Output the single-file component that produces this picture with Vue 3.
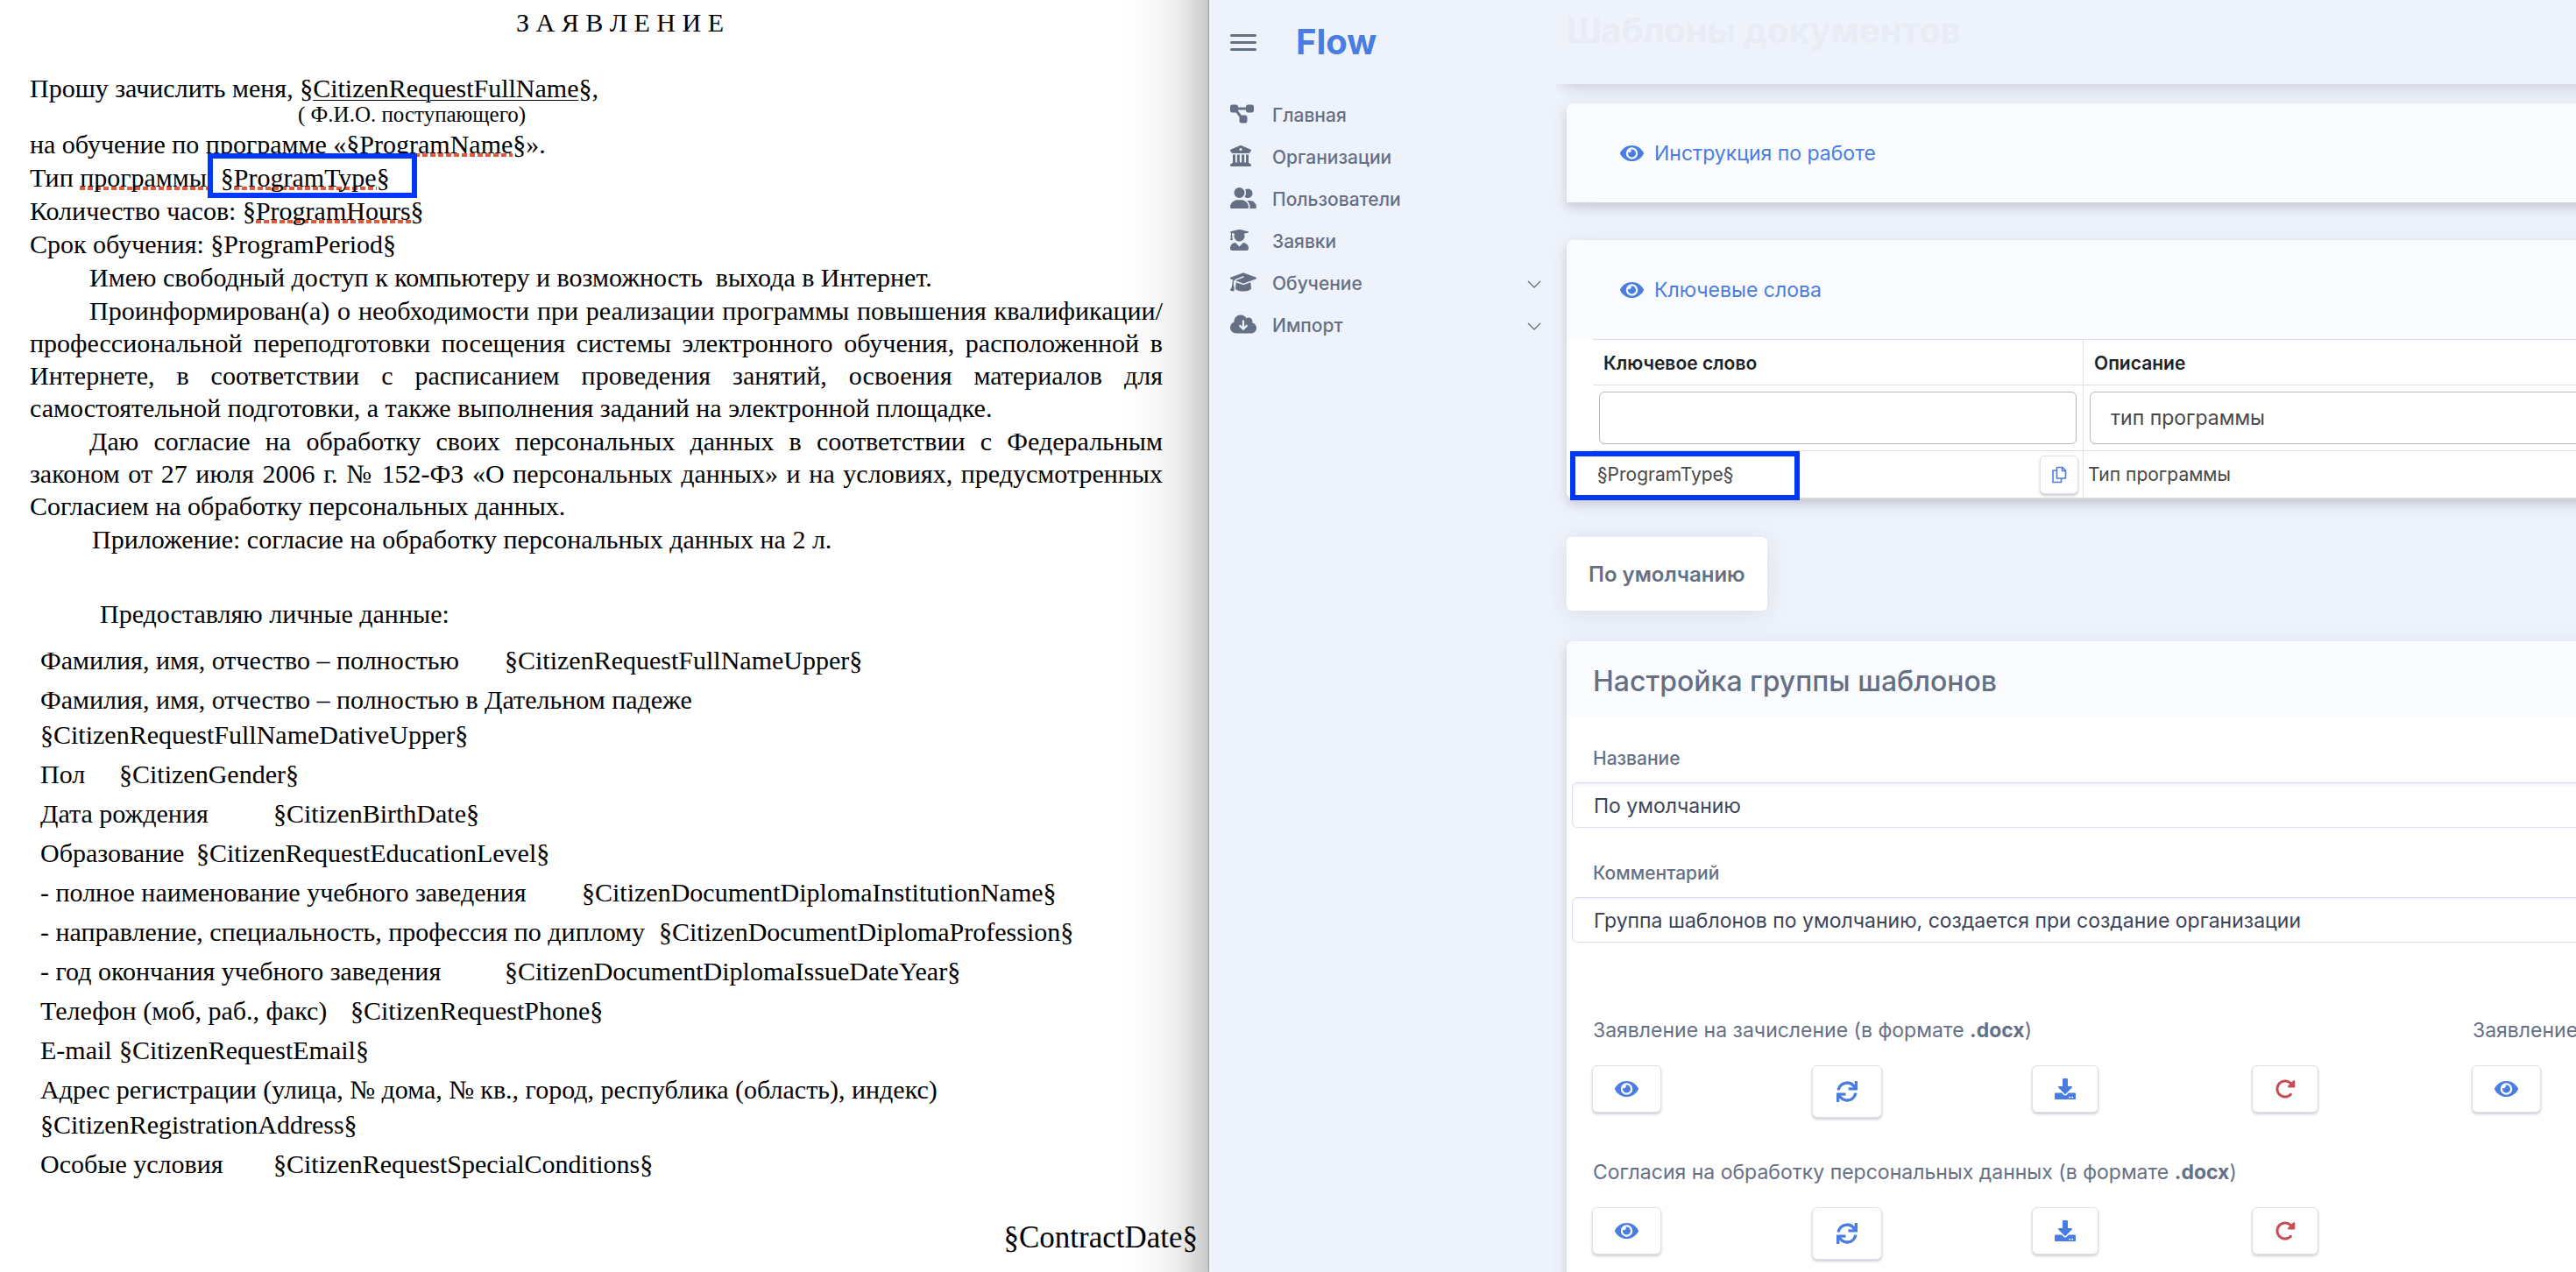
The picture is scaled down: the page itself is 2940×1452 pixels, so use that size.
<script setup>
import { ref } from 'vue'

const icons = {
  diagram: { box: '0 0 576 512', d: 'M0 80C0 53.5 21.5 32 48 32h96c26.5 0 48 21.5 48 48V96H384V80c0-26.5 21.5-48 48-48h96c26.5 0 48 21.5 48 48v96c0 26.5-21.5 48-48 48H432c-26.5 0-48-21.5-48-48V160H192v16c0 1.7-.1 3.4-.3 5L272 288h96c26.5 0 48 21.5 48 48v96c0 26.5-21.5 48-48 48H272c-26.5 0-48-21.5-48-48V336c0-1.7 .1-3.4 .3-5L144 224H48c-26.5 0-48-21.5-48-48V80z' },
  columns: { box: '0 0 512 512', d: 'M243.4 2.6l-224 96c-14 6-21.8 21-18.7 35.8S16.8 160 32 160v8c0 13.3 10.7 24 24 24H456c13.3 0 24-10.7 24-24v-8c15.2 0 28.3-10.7 31.3-25.6s-4.8-29.9-18.7-35.8l-224-96c-8-3.4-17.2-3.4-25.2 0zM128 224H64V420.3c-.6 .3-1.2 .7-1.8 1.1l-48 32c-11.7 7.8-17 22.4-12.9 35.9S17.9 512 32 512H480c14.1 0 26.5-9.2 30.6-22.7s-1.1-28.1-12.9-35.9l-48-32c-.6-.4-1.2-.7-1.8-1.1V224H384V416H344V224H280V416H232V224H168V416H128V224zM256 64a32 32 0 1 1 0 64 32 32 0 1 1 0-64z' },
  users: { box: '0 0 640 512', d: 'M96 128a128 128 0 1 1 256 0A128 128 0 1 1 96 128zM0 482.3C0 383.8 79.8 304 178.3 304h91.4C368.2 304 448 383.8 448 482.3c0 16.4-13.3 29.7-29.7 29.7H29.7C13.3 512 0 498.7 0 482.3zM609.3 512H471.4c5.4-9.4 8.6-20.3 8.6-32v-8c0-60.7-27.1-115.2-69.8-151.8c2.4-.1 4.7-.2 7.1-.2h61.4C567.8 320 640 392.2 640 481.3c0 17-13.8 30.7-30.7 30.7zM432 256c-31 0-59-12.6-79.3-32.9C372.4 196.5 384 163.6 384 128c0-26.8-6.6-52.1-18.3-74.3C384.3 40.1 407.2 32 432 32c61.9 0 112 50.1 112 112s-50.1 112-112 112z' },
  student: { box: '0 0 448 512', d: 'M319.4 320.6L224 416l-95.4-95.4C57.1 323.7 0 382.2 0 454.4v9.6c0 26.5 21.5 48 48 48h352c26.5 0 48-21.5 48-48v-9.6c0-72.2-57.1-130.7-128.6-133.8zM13.6 79.8l6.4 1.5v58.4c-7 4.2-12 11.5-12 20.3 0 8.4 4.6 15.4 11.1 19.7L3.5 242c-1.7 6.9 2.1 14 7.6 14h41.8c5.5 0 9.3-7.1 7.6-14l-15.6-62.3C51.4 175.4 56 168.4 56 160c0-8.8-5-16.1-12-20.3V87.1l66 15.9c-8.6 17.2-14 36.4-14 57 0 70.7 57.3 128 128 128s128-57.3 128-128c0-20.6-5.3-39.8-14-57l96.3-23.2c18.2-4.4 18.2-27.1 0-31.5l-190.4-46c-13-3.1-26.7-3.1-39.7 0L13.6 48.2c-18.1 4.4-18.1 27.2 0 31.6z' },
  cap: { box: '0 0 640 512', d: 'M320 32c-8.1 0-16.1 1.4-23.7 4.1L15.8 137.4C6.3 140.9 0 149.9 0 160s6.3 19.1 15.8 22.6l57.9 20.9C57.3 229.3 48 259.8 48 291.9v28.1c0 28.4-10.8 57.7-22.3 80.8c-6.5 13-13.9 25.8-22.5 37.6C0 442.7-.9 448.3 .9 453.4s6 8.9 11.2 10.2l64 16c4.2 1.1 8.7 .3 12.4-2s6.3-6.1 7.1-10.4c8.6-42.8 4.3-81.2-2.1-108.7C90.3 344.3 86 329.8 80 316.5V291.9c0-30.2 10.2-58.7 27.9-81.5c12.9-15.5 29.6-28 49.2-35.7l157-61.7c8.2-3.2 17.5 .8 20.7 9s-.8 17.5-9 20.7l-157 61.7c-12.4 4.9-23.3 12.4-32.2 21.6l159.6 57.6c7.6 2.7 15.6 4.1 23.7 4.1s16.1-1.4 23.7-4.1L624.2 182.6c9.5-3.4 15.8-12.5 15.8-22.6s-6.3-19.1-15.8-22.6L343.7 36.1C336.1 33.4 328.1 32 320 32zM128 408c0 35.3 86 72 192 72s192-36.7 192-72L496.7 262.6 354.5 314c-11.1 4-22.8 6-34.5 6s-23.5-2-34.5-6L143.3 262.6 128 408z' },
  cloud: { box: '0 0 640 512', d: 'M144 480C64.5 480 0 415.5 0 336c0-62.8 40.2-116.2 96.2-135.9c-.1-2.7-.2-5.4-.2-8.1c0-88.4 71.6-160 160-160c59.3 0 111 32.2 138.7 80.2C409.9 102 428.3 96 448 96c53 0 96 43 96 96c0 12.2-2.3 23.8-6.4 34.6C596 238.4 640 290.1 640 352c0 70.7-57.3 128-128 128H144zm79-167l80 80c9.4 9.4 24.6 9.4 33.9 0l80-80c9.4-9.4 9.4-24.6 0-33.9s-24.6-9.4-33.9 0l-39 39V184c0-13.3-10.7-24-24-24s-24 10.7-24 24V318.1l-39-39c-9.4-9.4-24.6-9.4-33.9 0s-9.4 24.6 0 33.9z' },
  eye: { box: '0 0 576 512', d: 'M572.52 241.4C518.29 135.59 410.93 64 288 64S57.68 135.64 3.48 241.41a32.35 32.35 0 0 0 0 29.19C57.71 376.41 165.07 448 288 448s230.32-71.64 284.52-177.41a32.35 32.35 0 0 0 0-29.19zM288 400a144 144 0 1 1 144-144 143.93 143.93 0 0 1-144 144zm0-240a95.31 95.31 0 0 0-25.31 3.79 47.85 47.85 0 0 1-66.9 66.9A95.78 95.78 0 1 0 288 160z' },
  sync: { box: '0 0 512 512', d: 'M440.65 12.57l4 82.77A247.16 247.16 0 0 0 255.83 8C134.73 8 33.91 94.92 12.29 209.82A12 12 0 0 0 24.09 224h49.05a12 12 0 0 0 11.67-9.26 175.91 175.91 0 0 1 317-56.94l-101.46-4.86a12 12 0 0 0-12.57 12v47.41a12 12 0 0 0 12 12H500a12 12 0 0 0 12-12V12a12 12 0 0 0-12-12h-47.37a12 12 0 0 0-11.98 12.57zM255.83 432a175.61 175.61 0 0 1-146-77.8l101.8 4.87a12 12 0 0 0 12.57-12v-47.4a12 12 0 0 0-12-12H12a12 12 0 0 0-12 12V500a12 12 0 0 0 12 12h47.35a12 12 0 0 0 12-12.6l-4.15-82.57A247.17 247.17 0 0 0 255.83 504c121.11 0 221.93-86.92 243.55-201.82a12 12 0 0 0-11.8-14.18h-49.05a12 12 0 0 0-11.67 9.26A175.86 175.86 0 0 1 255.83 432z' },
  download: { box: '0 0 512 512', d: 'M216 0h80c13.3 0 24 10.7 24 24v168h87.7c17.8 0 26.7 21.5 14.1 34.1L269.7 378.3c-7.5 7.5-19.8 7.5-27.3 0L90.1 226.1c-12.6-12.6-3.7-34.1 14.1-34.1H192V24c0-13.3 10.7-24 24-24zm296 376v112c0 13.3-10.7 24-24 24H24c-13.3 0-24-10.7-24-24V376c0-13.3 10.7-24 24-24h146.7l49 49c20.1 20.1 52.5 20.1 72.6 0l49-49H488c13.3 0 24 10.7 24 24zm-124 88c0-11-9-20-20-20s-20 9-20 20 9 20 20 20 20-9 20-20zm64 0c0-11-9-20-20-20s-20 9-20 20 9 20 20 20 20-9 20-20z' },
  reset: { box: '0 0 512 512', d: 'M463.5 224H472c13.3 0 24-10.7 24-24V72c0-9.7-5.8-18.5-14.8-22.2s-19.3-1.7-26.2 5.2L413.4 96.6c-87.6-86.5-228.7-86.2-315.8 1c-87.5 87.5-87.5 229.3 0 316.8s229.3 87.5 316.8 0c12.5-12.5 12.5-32.8 0-45.3s-32.8-12.5-45.3 0c-62.5 62.5-163.8 62.5-226.3 0s-62.5-163.8 0-226.3c62.2-62.2 162.7-62.5 225.3-1L327 183c-6.9 6.9-8.9 17.2-5.2 26.2s12.5 14.8 22.2 14.8H463.5z' },
}

const nav = [
  { label: 'Главная', icon: 'diagram' },
  { label: 'Организации', icon: 'columns' },
  { label: 'Пользователи', icon: 'users' },
  { label: 'Заявки', icon: 'student' },
  { label: 'Обучение', icon: 'cap', nested: true },
  { label: 'Импорт', icon: 'cloud', nested: true },
]

const personal = [
  ['Фамилия, имя, отчество – полностью\t§CitizenRequestFullNameUpper§'],
  ['Фамилия, имя, отчество – полностью в Дательном падеже', '§CitizenRequestFullNameDativeUpper§'],
  ['Пол\t§CitizenGender§'],
  ['Дата рождения\t§CitizenBirthDate§'],
  ['Образование\t§CitizenRequestEducationLevel§'],
  ['- полное наименование учебного заведения\t§CitizenDocumentDiplomaInstitutionName§'],
  ['- направление, специальность, профессия по диплому\t§CitizenDocumentDiplomaProfession§'],
  ['- год окончания учебного заведения\t§CitizenDocumentDiplomaIssueDateYear§'],
  ['Телефон (моб, раб., факс)\t§CitizenRequestPhone§'],
  ['E-mail\t§CitizenRequestEmail§'],
  ['Адрес регистрации (улица, № дома, № кв., город, республика (область), индекс)', '§CitizenRegistrationAddress§'],
  ['Особые условия\t§CitizenRequestSpecialConditions§'],
]

const actions = [
  { icon: 'eye', title: 'Просмотр' },
  { icon: 'sync', title: 'Заменить', tall: true },
  { icon: 'download', title: 'Скачать' },
  { icon: 'reset', title: 'Сбросить', danger: true },
]

const templates = [
  'Заявление на зачисление',
  'Заявление на отчисление',
  'Согласия на обработку персональных данных',
]

const keyword = ref('')
const description = ref('тип программы')
const groupName = ref('По умолчанию')
const comment = ref('Группа шаблонов по умолчанию, создается при создание организации')
</script>

<template>
  <div class="screen">
    <article class="doc">
      <div class="doc-text">
        <h1>З А Я В Л Е Н И Е</h1>
        <p class="lead">Прошу зачислить меня, §<u>CitizenRequestFullName</u>§,</p>
        <p class="hint">( Ф.И.О. поступающего)</p>
        <p>на обучение по программе «§<span class="typo">ProgramName</span>§».</p>
        <p>Тип <span class="typo">программы:</span> <span class="marked">§<span class="typo">ProgramType</span>§<i class="frame frame-doc"></i></span></p>
        <p>Количество часов: §<span class="typo">ProgramHours</span>§</p>
        <p>Срок обучения: §ProgramPeriod§</p>
        <p class="indent">Имею свободный доступ к компьютеру и возможность&nbsp; выхода в Интернет.</p>
        <p class="indent">Проинформирован(а) о необходимости при реализации программы повышения квалификации/<wbr>профессиональной переподготовки посещения системы электронного обучения, расположенной в Интернете, в соответствии с расписанием проведения занятий, освоения материалов для самостоятельной подготовки, а также выполнения заданий на электронной площадке.</p>
        <p class="indent">Даю согласие на обработку своих персональных данных в соответствии с Федеральным законом от 27 июля 2006 г. № 152-ФЗ «О персональных данных» и на условиях, предусмотренных Согласием на обработку персональных данных.</p>
        <p class="indent attachment">Приложение: согласие на обработку персональных данных на 2 л.</p>
        <p class="personal-title">Предоставляю личные данные:</p>
      </div>
      <div class="personal">
        <div v-for="row in personal" :key="row[0]" class="personal-row">
          <div v-for="line in row" :key="line">{{ line }}</div>
        </div>
      </div>
      <p class="contract">§ContractDate§</p>
    </article>

    <div class="app">
      <aside class="sidebar">
        <div class="brand-row">
          <button class="burger" type="button" aria-label="Меню"><i></i><i></i><i></i></button>
          <a class="brand" href="#">Flow</a>
        </div>
        <nav>
          <a v-for="item in nav" :key="item.label" class="nav-item" href="#">
            <span class="nav-icon">
              <svg :viewBox="icons[item.icon].box" height="24"><path :d="icons[item.icon].d" fill="currentColor" /></svg>
            </span>
            <span class="nav-label">{{ item.label }}</span>
            <svg v-if="item.nested" class="chevron" viewBox="0 0 16 10" width="16" height="10"><path d="M1 1l7 7 7-7" fill="none" stroke="currentColor" stroke-width="1.3" /></svg>
          </a>
        </nav>
      </aside>

      <main class="main">
        <header class="topbar"><h2>Шаблоны документов</h2></header>
        <div class="content">
          <section class="card card-square">
            <div class="card-head">
              <a class="toggle" href="#">
                <svg :viewBox="icons.eye.box" width="27" height="24"><path :d="icons.eye.d" fill="currentColor" /></svg>
                Инструкция по работе
              </a>
            </div>
          </section>

          <section class="card">
            <div class="card-head">
              <a class="toggle" href="#">
                <svg :viewBox="icons.eye.box" width="27" height="24"><path :d="icons.eye.d" fill="currentColor" /></svg>
                Ключевые слова
              </a>
            </div>
            <div class="table-wrap">
              <table>
                <thead>
                  <tr class="head-row"><th class="key-col">Ключевое слово</th><th>Описание</th></tr>
                  <tr class="filter-row">
                    <td><input v-model="keyword" class="filter" type="text" aria-label="Ключевое слово" /></td>
                    <td><input v-model="description" class="filter" type="text" aria-label="Описание" /></td>
                  </tr>
                </thead>
                <tbody>
                  <tr class="data-row">
                    <td>
                      <div class="key-cell">
                        <span>§ProgramType§</span>
                        <button class="btn copy" type="button" aria-label="Копировать">
                          <svg viewBox="0 0 18 20" width="18" height="20" fill="none" stroke="currentColor" stroke-width="1.6" stroke-linejoin="round">
                            <path d="M6.500 1.500h6.500l3.500 3.500v9h-10zM12.500 1.500v4h4M6.500 5h-4.500v13.500h9.500v-4.500" />
                          </svg>
                        </button>
                      </div>
                      <i class="frame frame-key"></i>
                    </td>
                    <td>Тип программы</td>
                  </tr>
                </tbody>
              </table>
            </div>
          </section>

          <button class="tab" type="button">По умолчанию</button>

          <section class="card">
            <div class="card-title"><h3>Настройка группы шаблонов</h3></div>
            <form class="form" @submit.prevent>
              <div class="field">
                <label for="group-name">Название</label>
                <input id="group-name" v-model="groupName" type="text" />
              </div>
              <div class="field">
                <label for="group-comment">Комментарий</label>
                <input id="group-comment" v-model="comment" type="text" />
              </div>
              <div class="templates">
                <div v-for="name in templates" :key="name" class="template">
                  <p>{{ name }} (в формате <b>.docx</b>)</p>
                  <div class="actions">
                    <div v-for="action in actions" :key="action.icon">
                      <button class="btn" :class="{ tall: action.tall, danger: action.danger }" type="button" :aria-label="action.title">
                        <svg :viewBox="icons[action.icon].box" height="24"><path :d="icons[action.icon].d" fill="currentColor" /></svg>
                      </button>
                    </div>
                  </div>
                </div>
              </div>
            </form>
          </section>
        </div>
      </main>
    </div>
  </div>
</template>

<style>
body {
  margin: 0;
  background: #eef2fa;
}
</style>

<style scoped>
* {
  box-sizing: border-box;
}

.screen {
  display: grid;
  grid-template-columns: minmax(0, 23fr) minmax(0, 26fr);
  height: 100vh;
  overflow: hidden;
}

/* Document */
.doc {
  padding-top: 7px;
  overflow: hidden;
  border-right: 1px solid #a2a3a6;
  background: linear-gradient(to left, #c8c8c8 0, #dadada 16px, #ececec 34px, #f8f8f8 60px, #fff 100px);
  color: #000;
  font: 30px/37px "Liberation Serif", "Times New Roman", serif;
}

.doc-text {
  padding: 0 52px 0 34px;
}

.doc p {
  margin: 0 0 1px;
}

.doc h1 {
  margin: 0 0 39px;
  font-size: 30px;
  font-weight: 400;
  line-height: 37px;
  text-align: center;
  text-indent: 54px;
}

.doc .lead {
  margin: 0;
  line-height: 35px;
}

.doc u {
  text-decoration-thickness: 1px;
  text-underline-offset: 3px;
}

.doc .hint {
  margin: 0 0 2px;
  padding-left: 306px;
  font-size: 25px;
  line-height: 26px;
}

.doc .indent {
  text-align: justify;
  text-indent: 68px;
}

.doc .attachment {
  text-indent: 71px;
}

.doc .personal-title {
  margin: 48px 0 15px;
  padding-left: 80px;
}

.typo {
  background: repeating-linear-gradient(to right, #e2593c 0 6px, transparent 6px 9px) left bottom 2px / 100% 4px no-repeat;
}

.marked {
  position: relative;
}

.frame {
  position: absolute;
  border: 6px solid #0038fb;
}

.frame-doc {
  top: -11px;
  right: -31px;
  bottom: -7px;
  left: -15px;
}

.personal {
  padding-left: 48px;
  line-height: 40px;
  text-indent: -2px;
  tab-size: 88px;
  white-space: pre;
}

.personal-row {
  padding-bottom: 5px;
}

.doc .contract {
  margin: 39px 0 0;
  padding-right: 12px;
  font-size: 35px;
  line-height: 40px;
  text-align: right;
}

/* Application */
.app {
  display: grid;
  grid-template-columns: 396px minmax(0, 1fr);
  color: #667085;
  font: 23px/32px Inter, "Noto Sans", sans-serif;
}

a {
  color: inherit;
  text-decoration: none;
}

.sidebar {
  padding: 24px 17px 0 24px;
}

.brand-row {
  display: flex;
  align-items: center;
  gap: 45px;
  height: 48px;
}

.burger {
  display: flex;
  flex-direction: column;
  gap: 5px;
  width: 30px;
  padding: 0;
  border: 0;
  background: none;
}

.burger i {
  height: 3px;
  border-radius: 2px;
  background: #667085;
}

.brand {
  color: #4a7de2;
  font-size: 40px;
  font-weight: 700;
}

nav {
  display: flex;
  flex-direction: column;
  margin-top: 34px;
}

.nav-item {
  display: flex;
  align-items: center;
  height: 48px;
  font-size: 21px;
  font-weight: 500;
}

.nav-icon {
  display: flex;
  width: 48px;
}

.nav-label {
  flex: 1;
  padding-top: 4px;
}

.chevron {
  margin-top: 6px;
}

.main {
  min-width: 2080px;
}

/* Only the lower edge of the bar casts a shadow */
.topbar {
  height: 96px;
  padding: 10px 12px;
  background: #eef2fb;
  box-shadow: 0 10px 16px -8px rgba(40, 45, 70, 0.22);
  clip-path: inset(0 0 -30px 0);
}

.topbar h2 {
  margin: 0;
  color: #e8ecf4;
  font-size: 40px;
  font-weight: 700;
  line-height: 50px;
}

.content {
  padding: 22px 12px 0;
}

.card {
  margin-bottom: 43px;
  border-radius: 8px;
  background: #fff;
  box-shadow: 0 6px 10px rgba(50, 50, 70, 0.14), 0 4px 28px rgba(50, 50, 70, 0.08);
}

.card-square {
  border-radius: 8px 8px 0 0;
}

.card-head {
  display: flex;
  align-items: center;
  height: 113px;
  padding: 0 61px;
  border-radius: 8px 8px 0 0;
  background: #f9fbff;
}

.toggle {
  display: flex;
  align-items: center;
  gap: 12px;
  padding-top: 1px;
  color: #4a7de2;
}

.table-wrap {
  padding-left: 30px;
}

table {
  width: 100%;
  border-collapse: separate;
  border-spacing: 0;
  border-bottom: 2px solid #d8dadd;
  color: #484848;
  font-size: 21px;
  table-layout: fixed;
}

th,
td {
  position: relative;
  border-top: 1px solid #dddfe2;
  text-align: left;
}

tr > :first-child {
  border-right: 1px solid #dddfe2;
}

th {
  height: 52px;
  padding: 2px 12px 0;
  color: #222;
  font-weight: 600;
}

.key-col {
  width: 560px;
}

.filter-row td {
  height: 75px;
  padding: 7px;
}

.filter {
  display: block;
  width: 100%;
  height: 60px;
  padding: 0 23px;
  border: 1px solid #b8b8b8;
  border-radius: 6px;
  background: #fff;
  color: #484848;
  font: 23px/32px Inter, "Noto Sans", sans-serif;
}

.data-row td {
  height: 54px;
  padding: 0 5px;
}

.key-cell {
  display: flex;
  align-items: center;
  justify-content: space-between;
}

.frame-key {
  top: 0;
  left: -26px;
  width: 262px;
  height: 56px;
}

.btn {
  display: flex;
  align-items: center;
  justify-content: center;
  height: 54px;
  padding: 0 25px;
  border: 1px solid #dfe0e6;
  border-radius: 6px;
  background: #fff;
  box-shadow: 0 2px 3px rgba(50, 50, 80, 0.24);
  color: #4a7de2;
}

.btn.copy {
  width: 44px;
  height: 44px;
  padding: 0;
}

.btn.tall {
  height: 60px;
  padding: 0 27px;
}

.btn.danger {
  color: #c84c55;
}

.tab {
  display: block;
  height: 84px;
  margin-bottom: 35px;
  padding: 2px 25px 0;
  border: 0;
  border-radius: 6px;
  background: #fff;
  box-shadow: 0 4px 28px rgba(50, 50, 70, 0.1);
  color: #667085;
  font: 600 24px/32px Inter, "Noto Sans", sans-serif;
}

.card-title {
  height: 85px;
  padding: 26px 30px;
  border-radius: 8px 8px 0 0;
  background: #f9fbff;
}

.card-title h3 {
  margin: 0;
  font-size: 32px;
  font-weight: 500;
  line-height: 40px;
}

.form {
  padding: 37px 6px;
}

.field {
  margin-bottom: 40px;
}

.field label {
  display: block;
  margin-bottom: 15px;
  padding-left: 24px;
  font-size: 21px;
  font-weight: 500;
  line-height: 24px;
}

.field input {
  display: block;
  width: 100%;
  height: 52px;
  padding: 2px 24px 0;
  border: 1px solid #d9dff0;
  border-radius: 6px;
  background: #fff;
  box-shadow: inset 0 2px 3px rgba(50, 50, 80, 0.07);
  color: #3c4457;
  font: 23px/32px Inter, "Noto Sans", sans-serif;
}

.templates {
  display: grid;
  grid-template-columns: repeat(2, 1004px);
  row-gap: 46px;
  padding: 44px 0 0 23px;
}

.template p {
  margin: 0 0 24px;
  padding-left: 1px;
}

.actions {
  display: grid;
  grid-template-columns: repeat(4, 1fr);
  align-items: start;
}

.actions > div {
  display: flex;
}
</style>
